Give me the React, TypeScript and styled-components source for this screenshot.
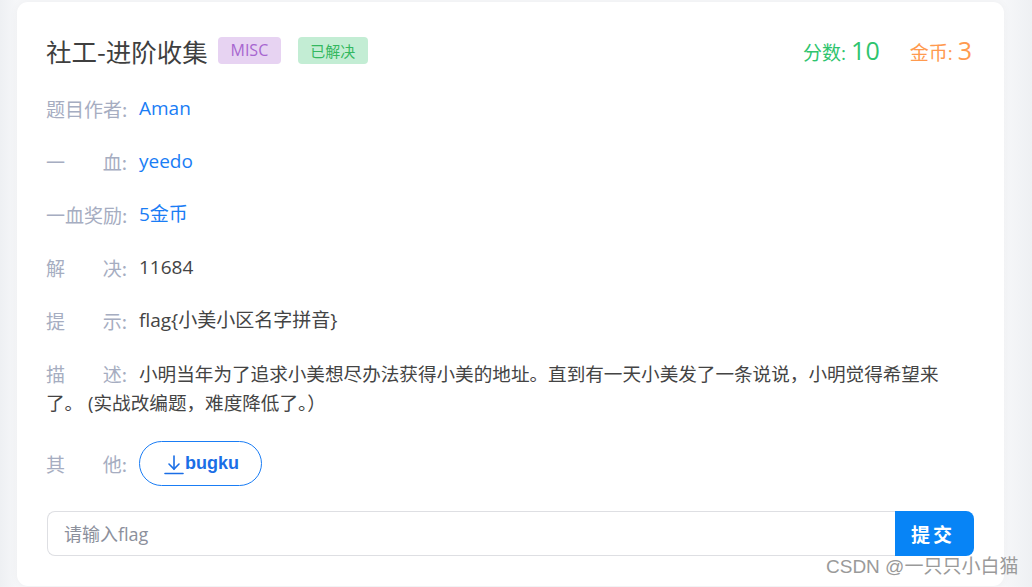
import React from "react";
import styled, { createGlobalStyle } from "styled-components";

const Global = createGlobalStyle`
  html, body { margin: 0; padding: 0; background: #f3f4f6; }
  body { font-family: "Open Sans", "Noto Sans CJK SC", sans-serif; }
  * { box-sizing: border-box; }
`;

const Page = styled.div`
  position: relative;
  width: 1032px;
  height: 587px;
  padding: 2px 28px 0 17px;
  overflow: hidden;
  background: linear-gradient(90deg, #eef0f3 0px, #f6f7f9 17px, #f6f7f9 1004px, #eef0f3 1032px);
`;

const Card = styled.div`
  width: 987px;
  height: 584px;
  background: #fff;
  border-radius: 11px;
  box-shadow: 0 0 10px rgba(0, 0, 0, 0.04);
  padding: 20px 30px 30px 29px;
  display: flex;
  flex-direction: column;
`;

const Header = styled.div`
  height: 56px;
  display: flex;
  align-items: center;
  margin-bottom: 16px;
`;

const Title = styled.h1`
  margin: 0;
  font-size: 25.5px;
  font-weight: 400;
  color: #3f3f3f;
  font-family: "Noto Sans CJK SC", sans-serif;
`;

const Badge = styled.span<{ $bg: string; $fg: string; $w: number; $ml: number; $fs: number }>`
  display: inline-flex;
  align-items: center;
  justify-content: center;
  width: ${(p) => p.$w}px;
  height: 27px;
  margin-left: ${(p) => p.$ml}px;
  border-radius: 4px;
  background: ${(p) => p.$bg};
  color: ${(p) => p.$fg};
  font-size: ${(p) => p.$fs}px;
  font-family: "Open Sans", "Noto Sans CJK SC", sans-serif;
`;

const Stats = styled.div`
  margin-left: auto;
  margin-right: 2px;
  display: flex;
  align-items: baseline;
  gap: 30px;
`;

const Stat = styled.span<{ $c: string }>`
  color: ${(p) => p.$c};
  font-size: 19px;
  font-family: "Open Sans", "Noto Sans CJK SC", sans-serif;
  & b {
    font-weight: 400;
    font-size: 25px;
    margin-left: 5px;
  }
`;

const Rows = styled.div`
  display: flex;
  flex-direction: column;
  gap: 24px;
`;

const Row = styled.div`
  display: flex;
  align-items: center;
  font-size: 19px;
  line-height: 29px;
  font-family: "Open Sans", "Noto Sans CJK SC", sans-serif;
  color: #444;
`;

const Para = styled.div`
  width: 900px;
  font-size: 18.6px;
  line-height: 29px;
  font-family: "Open Sans", "Noto Sans CJK SC", sans-serif;
  color: #444;
`;

const Label = styled.span`
  display: inline-flex;
  justify-content: space-between;
  width: 81px;
  margin-right: 12px;
  font-size: 19px;
  color: #a6adc1;
  white-space: nowrap;
  font-family: "Noto Sans CJK SC", sans-serif;
  vertical-align: top;
`;

const Link = styled.span`
  color: #1a7df5;
`;

const DownloadButton = styled.button`
  display: inline-flex;
  align-items: center;
  justify-content: center;
  width: 123px;
  height: 45px;
  border: 1px solid #1a7df5;
  border-radius: 23px;
  background: #fff;
  color: #1a6ee6;
  font-size: 18px;
  font-weight: 700;
  font-family: "Liberation Sans", sans-serif;
  padding: 0 0 0 2px;
  gap: 1px;
  cursor: pointer;
`;

const InputGroup = styled.div`
  display: flex;
  height: 45px;
  margin-top: 25px;
  margin-left: 1px;
`;

const Input = styled.input`
  flex: 1;
  height: 45px;
  border: 1px solid #dedfe3;
  border-right: none;
  border-radius: 8px 0 0 8px;
  padding: 0 16px;
  font-size: 18px;
  font-family: "Open Sans", "Noto Sans CJK SC", sans-serif;
  outline: none;
  &::placeholder {
    color: #8c909c;
  }
`;

const Submit = styled.button`
  width: 79px;
  height: 45px;
  border: none;
  border-radius: 0 8px 8px 0;
  background: #0784f6;
  color: #fff;
  font-size: 19px;
  font-weight: 700;
  letter-spacing: 3px;
  padding-left: 3px;
  font-family: "Noto Sans CJK SC", sans-serif;
`;

const Watermark = styled.div`
  position: absolute;
  left: 826px;
  top: 554px;
  font-size: 19px;
  line-height: 26px;
  color: #9a9a9a;
  font-family: "Liberation Sans", "Noto Sans CJK SC", sans-serif;
  text-shadow: 0 0 1px rgba(255, 255, 255, 0.8);
  white-space: nowrap;
`;

const DownloadIcon = () => (
  <svg width="20" height="22" viewBox="0 0 20 22" fill="none" stroke="#1a6ee6" strokeWidth="1.6" strokeLinecap="round">
    <path d="M10 3 V16" />
    <path d="M5 11 L10 16 L15 11" />
    <path d="M1 20.5 H19" />
  </svg>
);

const L = ({ a, b }: { a: string; b?: string }) => (
  <Label>
    <span>{a}</span>
    {b && <span>{b}</span>}
  </Label>
);

export default function App() {
  return (
    <>
      <Global />
      <Page>
        <Card>
          <Header>
            <Title>社工-进阶收集</Title>
            <Badge $bg="#e7d3f2" $fg="#a766d0" $w={63} $ml={10} $fs={16}>MISC</Badge>
            <Badge $bg="#c3edd4" $fg="#34b860" $w={70} $ml={17} $fs={15}>已解决</Badge>
            <Stats>
              <Stat $c="#2fc46e">分数:<b>10</b></Stat>
              <Stat $c="#ff9a4f">金币:<b>3</b></Stat>
            </Stats>
          </Header>
          <Rows>
            <Row><L a="题目作者:" /><Link>Aman</Link></Row>
            <Row><L a="一" b="血:" /><Link>yeedo</Link></Row>
            <Row><L a="一血奖励:" /><Link>5金币</Link></Row>
            <Row><L a="解" b="决:" />11684</Row>
            <Row><L a="提" b="示:" />flag{"{"}小美小区名字拼音{"}"}</Row>
            <Para>
              <L a="描" b="述:" />小明当年为了追求小美想尽办法获得小美的地址。直到有一天小美发了一条说说，小明觉得希望来了。 (实战改编题，难度降低了。）
            </Para>
            <Row>
              <L a="其" b="他:" />
              <DownloadButton><DownloadIcon />bugku</DownloadButton>
            </Row>
          </Rows>
          <InputGroup>
            <Input placeholder="请输入flag" />
            <Submit>提交</Submit>
          </InputGroup>
        </Card>
        <Watermark>CSDN @一只只小白猫</Watermark>
      </Page>
    </>
  );
}
